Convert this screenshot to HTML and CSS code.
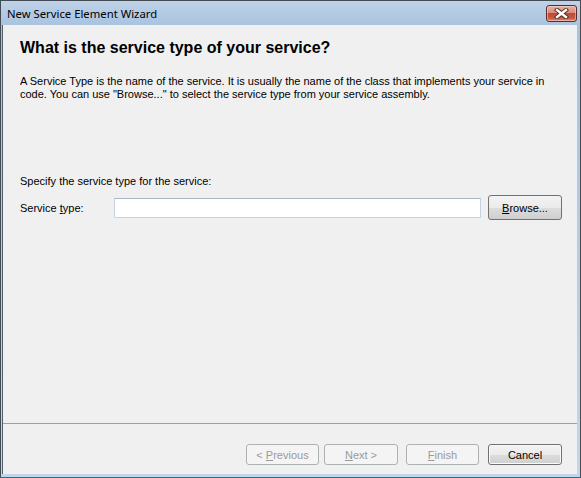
FILE: index.html
```html
<!DOCTYPE html>
<html lang="en">
<head>
  <meta charset="UTF-8">
  <title>New Service Element Wizard</title>
  <link rel="stylesheet" href="styles.css">
</head>
<body>
  <div class="window">
    <div class="titlebar">
      <span class="title">New Service Element Wizard</span>
      <button class="close-btn" title="Close">
        <svg width="15" height="11" viewBox="0 0 15 11">
          <path d="M3 2 L12 9 M12 2 L3 9" stroke="#4a2420" stroke-width="4.2" stroke-linecap="square" fill="none"/>
          <path d="M3 2 L12 9 M12 2 L3 9" stroke="#ffffff" stroke-width="2.4" stroke-linecap="square" fill="none"/>
        </svg>
      </button>
    </div>

    <div class="client">
      <div class="page">
        <h1>What is the service type of your service?</h1>
        <p class="intro">A Service Type is the name of the service. It is usually the name of the class that implements your service in code. You can use "Browse..." to select the service type from your service assembly.</p>

        <p class="hint">Specify the service type for the service:</p>
        <div class="field-row">
          <label for="serviceType">Service <u>t</u>ype:</label>
          <input type="text" id="serviceType">
          <button class="btn browse"><u>B</u>rowse...</button>
        </div>
      </div>

      <div class="footer">
        <button class="btn narrow" disabled>&lt; <u>P</u>revious</button>
        <button class="btn next" disabled><u>N</u>ext &gt;</button>
        <button class="btn narrow finish" disabled><u>F</u>inish</button>
        <button class="btn default cancel">Cancel</button>
      </div>
    </div>
  </div>
</body>
</html>
```

FILE: styles.css
```css
body {
  margin: 0;
  font-family: "Liberation Sans", Arial, sans-serif;
  font-size: 11px;
  color: #000;
}

.window {
  width: 581px;
  height: 478px;
  box-sizing: border-box;
  display: flex;
  flex-direction: column;
  padding: 0 3px 3px 1px;
  border: 1px solid #434c55;
  border-bottom-color: #2f6e7e;
  background: linear-gradient(to bottom, #bfd2e8 0px, #a9c3df 24px, #c0d6ea 100%);
}

/* title bar */
.titlebar {
  height: 24px;
  display: flex;
  align-items: flex-start;
  justify-content: space-between;
  padding-left: 5px;
}

.title {
  font-family: "Noto Sans", sans-serif;
  font-size: 11.3px;
  line-height: 16px;
  margin-top: 5px;
}

.close-btn {
  width: 31px;
  height: 17px;
  margin-top: 4px;
  margin-right: 0;
  padding: 0;
  border: 1px solid #5b2d29;
  border-radius: 3px;
  background: linear-gradient(to bottom, #eab0a2 0%, #d98b79 45%, #c14a33 50%, #c7573f 80%, #e08f74 100%);
  box-shadow: inset 0 0 0 1px rgba(255, 220, 210, 0.5);
  display: flex;
  align-items: center;
  justify-content: center;
}

/* client area */
.client {
  flex: 1;
  display: flex;
  flex-direction: column;
  background: #f0f0f0;
  border-left: 1px solid #4f5f6e;
}

.page {
  padding-left: 17px;
}

h1 {
  margin: 14px 0 0;
  font-size: 16px;
  line-height: 18px;
  font-weight: bold;
}

.intro {
  margin: 18px 0 0;
  width: 545px;
  line-height: 13px;
}

.hint {
  margin: 74px 0 0;
  line-height: 13px;
}

.field-row {
  display: flex;
  align-items: center;
  margin-top: 7px;
}

.field-row label {
  width: 94px;
}

.field-row input {
  width: 367px;
  height: 20px;
  box-sizing: border-box;
  margin: 0 7px 0 0;
  padding: 0 3px;
  border: 1px solid #c5d2df;
  border-top-color: #a6b6c6;
  background: #fff;
  font: inherit;
}

/* push buttons */
.btn {
  width: 74px;
  height: 21px;
  padding: 0;
  border: 1px solid #707070;
  border-radius: 3px;
  background: linear-gradient(to bottom, #f3f3f3 0%, #ebebeb 50%, #dddddd 51%, #cfcfcf 100%);
  font-family: "Liberation Sans", Arial, sans-serif;
  font-size: 11px;
  color: #000;
}

.btn.narrow {
  width: 73px;
}

.btn:disabled {
  border-color: #adb2b5;
  background: #f4f4f4;
  color: #9a9a9a;
}

.browse {
  width: 74px;
  height: 25px;
}

.default {
  box-shadow: inset 0 0 0 1px #f8fbfd;
}

.footer {
  margin-top: auto;
  border-top: 1px solid #a0a0a0;
  display: flex;
  justify-content: flex-end;
  padding: 20px 15px 9px 0;
}

.next {
  margin-left: 5px;
}

.finish {
  margin-left: 8px;
}

.cancel {
  margin-left: 9px;
}
```
